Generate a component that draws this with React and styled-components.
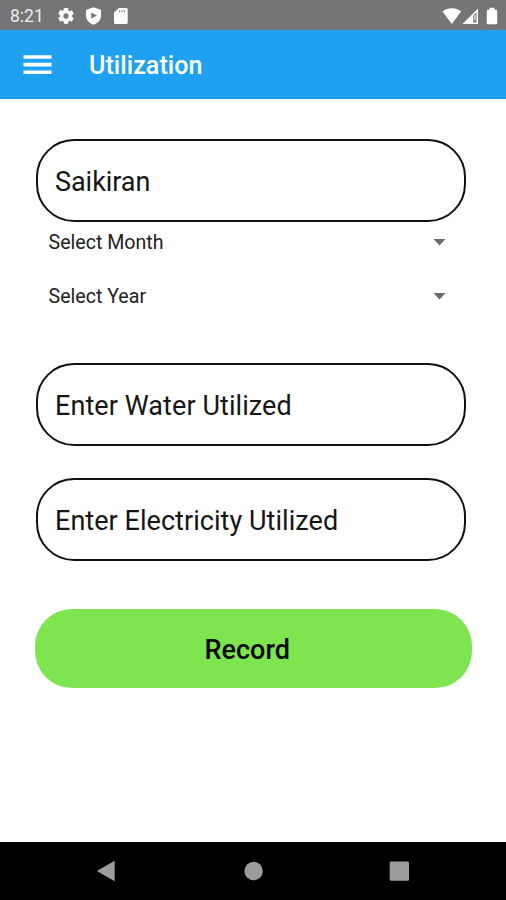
import React from "react";
import styled, { createGlobalStyle } from "styled-components";

const GlobalStyle = createGlobalStyle`
  *, *::before, *::after { box-sizing: border-box; }
  body { margin: 0; background: #fff; }
`;

const Screen = styled.div`
  width: 506px;
  height: 900px;
  display: flex;
  flex-direction: column;
  overflow: hidden;
  background: #fff;
  color: #161616;
  font-family: Roboto, "Liberation Sans", sans-serif;
`;

const StatusBar = styled.header`
  height: 30px;
  flex: none;
  display: flex;
  align-items: center;
  padding: 1px 8px 0 10px;
  background: #757575;
  color: #fff;
`;

const Clock = styled.time`
  width: 48px;
  font-size: 17.5px;
  line-height: 20px;
  color: #eee;
`;

const Notifications = styled.div`
  display: flex;
  align-items: center;
  gap: 11px;
  flex: 1;
`;

const Indicators = styled.div`
  display: flex;
  align-items: center;
`;

const Glyph = styled.svg`
  display: block;
  flex: none;
  fill: currentColor;
`;

const AppBar = styled.nav`
  height: 69px;
  flex: none;
  display: flex;
  align-items: center;
  padding: 2px 23px 0;
  border-bottom: 1px solid #128fe0;
  background: #1ea1f1;
  color: #fff;
`;

const MenuButton = styled.button`
  width: 29px;
  padding: 0;
  margin-right: 37px;
  border: 0;
  background: none;
  color: inherit;
`;

const Title = styled.h1`
  margin: 0;
  padding-top: 2px;
  font-size: 25px;
  font-weight: 500;
  line-height: 30px;
  letter-spacing: 0.08px;
`;

const Form = styled.main`
  flex: 1;
  display: flex;
  flex-direction: column;
  padding: 40px 0 0 36px;
`;

const Field = styled.div`
  width: 430px;
  height: 83px;
  display: flex;
  align-items: center;
  margin-bottom: ${(p) => p.$after}px;
  padding: 2px 17px 0;
  border: 2px solid #111;
  border-radius: 38px;
  font-size: 27px;
  line-height: 32px;
  letter-spacing: ${(p) => p.$tracking}px;
`;

const Select = styled.div`
  width: 410px;
  height: 24px;
  display: flex;
  align-items: center;
  justify-content: space-between;
  margin-bottom: ${(p) => p.$after}px;
  padding-left: 12.5px;
  font-size: 19.6px;
  line-height: 24px;
  color: #222;

  svg {
    margin-bottom: 2px;
    color: #6b6b6b;
  }
`;

const RecordButton = styled.button`
  width: 437px;
  height: 79px;
  margin: 0 0 0 -1px;
  padding: 2px 0 0;
  border: 0;
  border-radius: 37px;
  background: #7ee551;
  color: #070b05;
  font-family: inherit;
  font-size: 27px;
  font-weight: 500;
  line-height: 32px;
  text-indent: -12.5px;
`;

const NavigationBar = styled.footer`
  height: 58px;
  flex: none;
  display: flex;
  align-items: center;
  justify-content: space-between;
  padding: 0 96px;
  background: #000;
  color: #9c9c9c;
`;

function Caret() {
  return (
    <Glyph width="13" height="7" viewBox="0 0 13 7">
      <path d="M.5 .1h12L6.5 6.5z" />
    </Glyph>
  );
}

export default function App() {
  return (
    <>
      <GlobalStyle />
      <Screen>
        <StatusBar>
          <Clock>8:21</Clock>
          <Notifications>
            <Glyph width="16" height="16" viewBox="2 2 20 20">
              <path fillRule="evenodd" stroke="currentColor" strokeWidth=".6" d="M19.14 12.94c.04-.3.06-.61.06-.94s-.02-.64-.07-.94l2.03-1.58a.49.49 0 0 0 .12-.61l-1.92-3.32a.49.49 0 0 0-.59-.22l-2.39.96a7 7 0 0 0-1.62-.94l-.36-2.54A.48.48 0 0 0 13.92 2h-3.84a.48.48 0 0 0-.47.41l-.36 2.54c-.59.24-1.13.57-1.62.94l-2.39-.96a.48.48 0 0 0-.59.22L2.74 8.87a.48.48 0 0 0 .12.61l2.03 1.58c-.05.3-.09.63-.09.94s.02.64.07.94l-2.03 1.58a.49.49 0 0 0-.12.61l1.92 3.32c.12.22.37.29.59.22l2.39-.96c.5.38 1.03.7 1.62.94l.36 2.54c.05.24.24.41.48.41h3.84c.24 0 .44-.17.47-.41l.36-2.54c.59-.24 1.13-.56 1.62-.94l2.39.96c.22.08.47 0 .59-.22l1.92-3.32a.48.48 0 0 0-.12-.61zM12 15.6A3.6 3.6 0 1 1 12 8.4a3.6 3.6 0 0 1 0 7.2z" />
            </Glyph>
            <Glyph width="17" height="18" viewBox="0 0 17 18">
              <path fillRule="evenodd" d="M8.5.3 16 3v5.5c0 4.5-3 7.6-7.5 9.2C4 16.1 1 13 1 8.5V3zM6.2 5.5v6l5.8-3z" />
            </Glyph>
            <Glyph width="16" height="18" viewBox="0 0 16 18">
              <path d="M6 1h7.2A1.5 1.5 0 0 1 14.7 2.5v13a1.5 1.5 0 0 1-1.5 1.5H2.5A1.5 1.5 0 0 1 1 15.5V5.5z" />
              <path d="M6.5 3v2.3M9 3v2.3M11.5 3v2.3" stroke="#959595" strokeWidth="1.3" />
            </Glyph>
          </Notifications>
          <Indicators>
            <Glyph width="20" height="18" viewBox="0 0 20 18">
              <path d="M.5 4.5C5.4.1 14.2.1 19.1 4.5L9.8 17z" />
            </Glyph>
            <Glyph width="24" height="18" viewBox="0 0 24 18">
              <path fillRule="evenodd" d="M.5 17 16 1.5V17zM11.2 8.5v7h3.3V5.2z" />
              <path d="M12.4 8h1.1v5.5h-1.1z" />
            </Glyph>
            <Glyph width="12" height="18" viewBox="0 0 12 18">
              <path d="M3.5.7h5v2h1.7c.6 0 1 .4 1 1v12.6c0 .6-.4 1-1 1H1.8c-.6 0-1-.4-1-1V3.7c0-.6.4-1 1-1h1.7z" />
            </Glyph>
          </Indicators>
        </StatusBar>

        <AppBar>
          <MenuButton aria-label="Menu">
            <Glyph width="29" height="20" viewBox="0 0 29 20">
              <path d="M.5.3h28v3.5H.5zM.5 7.8h28v3.7H.5zM.5 15.6h28v3.5H.5z" />
            </Glyph>
          </MenuButton>
          <Title>Utilization</Title>
        </AppBar>

        <Form>
          <Field $after={9} $tracking={-0.05}>Saikiran</Field>
          <Select $after={30}>Select Month<Caret /></Select>
          <Select $after={54}>Select Year<Caret /></Select>
          <Field $after={32} $tracking={0.08}>Enter Water Utilized</Field>
          <Field $after={48} $tracking={0.05}>Enter Electricity Utilized</Field>
          <RecordButton>Record</RecordButton>
        </Form>

        <NavigationBar>
          <Glyph width="19" height="22" viewBox="0 0 19 22">
            <path d="M18.7.7v20.6L.8 11z" />
          </Glyph>
          <Glyph width="22" height="20" viewBox="0 0 22 20">
            <circle cx="12.6" cy="10" r="9.2" />
          </Glyph>
          <Glyph width="21" height="20" viewBox="0 0 21 20">
            <rect x=".7" y=".5" width="19.3" height="19.3" rx="1.2" />
          </Glyph>
        </NavigationBar>
      </Screen>
    </>
  );
}
